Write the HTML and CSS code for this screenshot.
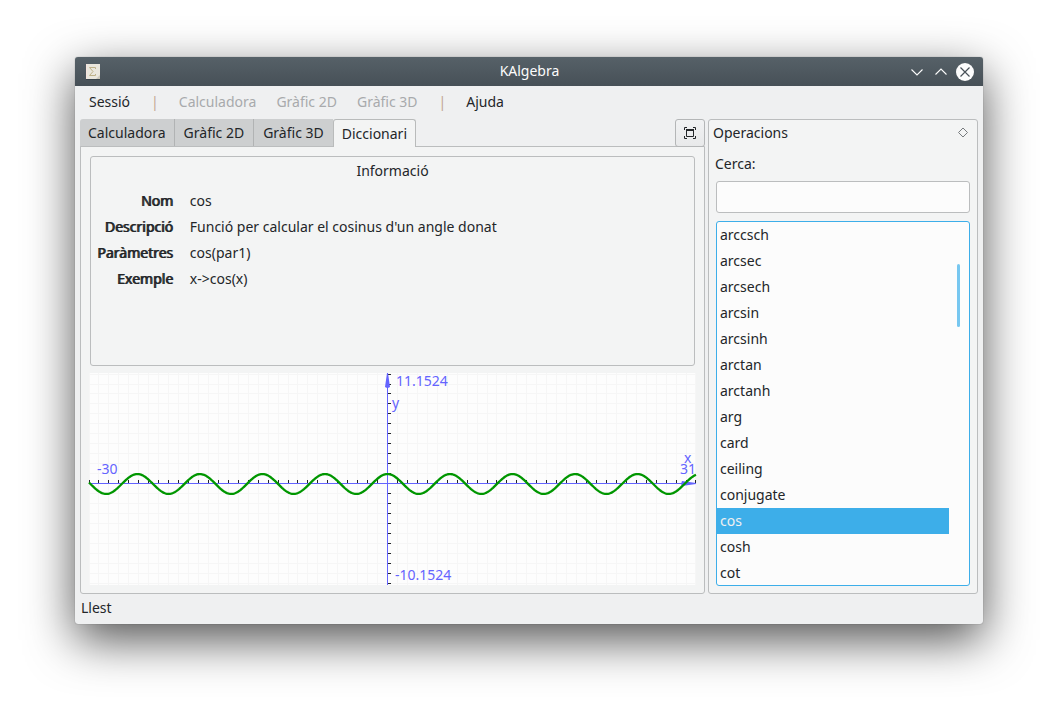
FILE: index.html
```html
<!DOCTYPE html>
<html lang="ca">
<head>
<meta charset="utf-8">
<title>KAlgebra</title>
<link rel="stylesheet" href="styles.css">
</head>
<body>
<div class="window">
  <header class="titlebar">
    <svg class="app-icon" width="16" height="18" viewBox="0 0 16 18" aria-hidden="true">
      <path d="M1 16.500h14" stroke="#303a41" opacity=".6"/>
      <rect x="1" y="1" width="14" height="15" fill="#ebe7dd"/>
      <path d="M1.500 1v15" stroke="#f6e3dc"/>
      <path d="M15 12v4h-4z" fill="#cfcabb"/>
      <path d="M10.500 6V4.500h-6L8 8.500l-3.500 4h6V11" fill="none" stroke="#bfb289"/>
    </svg>
    <h1 class="title">KAlgebra</h1>
    <div class="window-buttons">
      <button class="window-button" type="button" aria-label="Minimitza"><svg width="18" height="18" viewBox="0 0 18 18"><path d="M3.500 6.500 9 12l5.500-5.500" fill="none" stroke="#fcfcfc" stroke-width="1.100"/></svg></button>
      <button class="window-button" type="button" aria-label="Maximitza"><svg width="18" height="18" viewBox="0 0 18 18"><path d="M3.500 11.500 9 6l5.500 5.500" fill="none" stroke="#fcfcfc" stroke-width="1.100"/></svg></button>
      <button class="window-button" type="button" aria-label="Tanca"><svg width="18" height="18" viewBox="0 0 18 18"><circle cx="9" cy="9" r="9" fill="#fcfcfc"/><path d="m4.500 4.500 9 9m0-9-9 9" stroke="#475057" stroke-width="1.200"/></svg></button>
    </div>
  </header>
  <nav class="menubar">
    <button class="menu" type="button">Sessió</button>
    <span class="separator">|</span>
    <button class="menu" type="button" disabled>Calculadora</button>
    <button class="menu" type="button" disabled>Gràfic 2D</button>
    <button class="menu" type="button" disabled>Gràfic 3D</button>
    <span class="separator">|</span>
    <button class="menu" type="button">Ajuda</button>
  </nav>
  <main class="content">
    <section class="workspace">
      <div class="tab-row">
        <div class="tabs" role="tablist">
          <button class="tab" type="button" role="tab" aria-selected="false">Calculadora</button>
          <button class="tab tab-graph" type="button" role="tab" aria-selected="false">Gràfic 2D</button>
          <button class="tab tab-graph" type="button" role="tab" aria-selected="false">Gràfic 3D</button>
          <button class="tab tab-active" type="button" role="tab" aria-selected="true">Diccionari</button>
        </div>
        <button class="fullscreen" type="button" aria-label="Pantalla completa"><svg width="12" height="12" viewBox="0 0 12 12" fill="none" stroke="#232629"><path d="M.5 3V.5H3M9 .5h2.500V3M11.500 9v2.500H9M3 11.500H.5V9"/><path d="M2 3h8" stroke-width="2"/><path d="M2.500 3v6.500h7V3"/></svg></button>
      </div>
      <div class="pane" role="tabpanel">
        <section class="info">
          <h2 class="info-title">Informació</h2>
          <dl class="details">
            <dt>Nom</dt><dd>cos</dd>
            <dt>Descripció</dt><dd>Funció per calcular el cosinus d'un angle donat</dd>
            <dt>Paràmetres</dt><dd>cos(par1)</dd>
            <dt>Exemple</dt><dd>x-&gt;cos(x)</dd>
          </dl>
        </section>
        <svg class="plot" viewBox="0 0 607 212" role="img" aria-label="cos(x)">
          <rect class="plot-bg" width="607" height="212"/>
          <path id="grid" class="grid"/>
          <path id="ticks" class="ticks"/>
          <path class="axis" d="M0 110.500h607M298.500 0v212"/>
          <path class="arrow" d="M298 0h1l2 14-2 1h-1l-2-1zM607 110v1l-14 2-1-2 1-3z"/>
          <path id="curve" class="curve"/>
          <text class="plot-label" x="307" y="13">11.1524</text>
          <text class="plot-label" x="303" y="35">y</text>
          <text class="plot-label" x="306" y="207">-10.1524</text>
          <text class="plot-label" x="8" y="101">-30</text>
          <text class="plot-label" x="595" y="90">x</text>
          <text class="plot-label" x="591" y="101">31</text>
        </svg>
      </div>
    </section>
    <aside class="dock">
      <div class="dock-head">
        <h2 class="dock-title">Operacions</h2>
        <button class="float-button" type="button" aria-label="Desacobla"><svg width="12" height="12" viewBox="0 0 12 12"><path d="m6 1 4.500 4.500L6 10 1.500 5.500z" fill="none" stroke="#777b7e"/></svg></button>
      </div>
      <label class="search-label" for="search">Cerca:</label>
      <input class="search" id="search" type="text">
      <div class="list-frame">
        <ul class="list" role="listbox" aria-label="Operacions">
          <li class="item" role="option">arccsch</li>
          <li class="item" role="option">arcsec</li>
          <li class="item" role="option">arcsech</li>
          <li class="item" role="option">arcsin</li>
          <li class="item" role="option">arcsinh</li>
          <li class="item" role="option">arctan</li>
          <li class="item" role="option">arctanh</li>
          <li class="item" role="option">arg</li>
          <li class="item" role="option">card</li>
          <li class="item" role="option">ceiling</li>
          <li class="item" role="option">conjugate</li>
          <li class="item item-selected" role="option" aria-selected="true">cos</li>
          <li class="item" role="option">cosh</li>
          <li class="item" role="option">cot</li>
        </ul>
        <div class="scroll-track"><div class="scroll-thumb"></div></div>
      </div>
    </aside>
  </main>
  <footer class="status">Llest</footer>
</div>
<script src="plot.js"></script>
</body>
</html>
```

FILE: styles.css
```css
* {
  box-sizing: border-box;
}

body {
  display: flex;
  min-height: 100vh;
  margin: 0;
  padding: 57px 75px 93px;
  background: #fff;
  color: #232629;
  font: 14px/26px "Noto Sans", sans-serif;
}

button,
input {
  padding: 0;
  border: 0;
  background: none;
  color: inherit;
  font: inherit;
}

h1,
h2,
dl,
dd,
ul {
  margin: 0;
  padding: 0;
  font: inherit;
}

.window {
  display: flex;
  flex: 1;
  flex-direction: column;
  border-radius: 3px;
  background: #eff0f1;
  box-shadow: 0 0 1px rgba(0, 0, 0, .5), 0 16px 48px rgba(0, 0, 0, .68);
}

.titlebar {
  display: grid;
  grid-template-columns: 1fr auto 1fr;
  align-items: center;
  height: 29px;
  padding: 0 9px 0 10px;
  border-radius: 3px 3px 0 0;
  background: linear-gradient(#566168, #475057);
  color: #fcfcfc;
}

.title {
  padding-bottom: 2px;
}

.window-buttons {
  display: flex;
  justify-content: flex-end;
  gap: 6px;
}

.window-button {
  display: flex;
}

.menubar {
  display: flex;
  align-items: center;
  height: 33px;
  padding: 0 14px 2px;
}

.menu:disabled {
  color: #a8aaac;
}

.menu + .menu {
  margin-left: 20px;
}

.separator {
  padding: 0 20px 0 21px;
  color: #c2a693;
}

.content {
  display: flex;
  flex: 1;
  gap: 3px;
  padding: 0 5px;
}

.workspace {
  display: flex;
  flex: 1;
  flex-direction: column;
  min-width: 0;
}

.tab-row {
  display: flex;
  justify-content: space-between;
  height: 28px;
  margin-bottom: -1px;
}

.tabs {
  display: flex;
}

.tab {
  padding: 0 8px;
  border-right: 1px solid #b1b3b4;
  border-bottom: 1px solid #bbbdbe;
  background: #cdcfd0;
}

.tab:first-child {
  border-top-left-radius: 3px;
}

.tab-graph {
  padding: 0 9px;
}

.tab:nth-child(3) {
  border-right: 0;
}

.tab-active {
  padding: 0 8px;
  border: 1px solid #b9bbbb;
  border-bottom: 0;
  border-radius: 3px 3px 0 0;
  background: #f3f4f4;
}

.fullscreen {
  display: flex;
  align-items: center;
  justify-content: center;
  width: 30px;
  border: 1px solid #b4b6b7;
  border-radius: 3px;
  background: linear-gradient(#f1f2f3, #e8e9ea);
}

.pane {
  display: flex;
  flex: 1;
  flex-direction: column;
  gap: 7px;
  padding: 9px 8px 8px;
  border: 1px solid #bbbdbe;
  border-radius: 0 0 3px 3px;
  background: #f3f4f4;
}

.tab-active,
.fullscreen {
  z-index: 1;
}

.info {
  flex: 1;
  margin: 0 1px;
  border: 1px solid #bbbdbe;
  border-radius: 3px;
}

.info-title {
  padding-top: 1px;
  text-align: center;
}

.details {
  display: grid;
  grid-template-columns: auto 1fr;
  column-gap: 17px;
  padding: 4px 6px;
}

.details dt {
  text-align: right;
  text-shadow: 1px 0 currentColor;
}

.plot {
  display: block;
  width: 100%;
  overflow: visible;
}

.plot-bg {
  fill: #fdfdfd;
}

.grid,
.ticks,
.axis {
  fill: none;
  shape-rendering: crispEdges;
}

.grid {
  stroke: #f6f6f6;
}

.ticks {
  stroke: #232629;
}

.axis {
  stroke: #6464ff;
}

.arrow,
.plot-label {
  fill: #6464ff;
}

.curve {
  fill: none;
  stroke: #009600;
  stroke-width: 2.300;
}

.dock {
  display: flex;
  flex-direction: column;
  width: 270px;
  padding: 0 7px 7px;
  border: 1px solid #bbbdbe;
  border-radius: 3px;
  background: #f3f4f4;
}

.dock-head {
  display: flex;
  align-items: center;
  justify-content: space-between;
  margin: 0 1px 5px -3px;
}

.float-button {
  display: flex;
}

.search-label {
  margin: 0 -1px;
}

.search {
  height: 32px;
  margin: 4px 0 8px;
  padding: 0 6px;
  border: 1px solid #bbbdbe;
  border-radius: 3px;
  background: #fcfcfc;
}

.list-frame {
  display: flex;
  flex: 1 1 0;
  min-height: 0;
  overflow: hidden;
  border: 1px solid #3daee9;
  border-radius: 3px;
  background: #fcfcfc;
}

.list {
  flex: 1;
  list-style: none;
}

.item {
  height: 26px;
  padding: 0 3px;
}

.item-selected {
  background: #3daee9;
  color: #eff0f1;
}

.scroll-track {
  width: 20px;
  padding: 42px 8px 0;
}

.scroll-thumb {
  width: 3px;
  height: 63px;
  border-radius: 2px;
  background: #77c7f0;
}

.status {
  height: 30px;
  padding: 1px 6px;
}
```

FILE: plot.js
```js
const WIDTH = 607;
const HEIGHT = 212;
const ORIGIN_X = 298.5;
const ORIGIN_Y = 110.5;
const UNIT = 9.95;

const snap = (v) => Math.floor(v) + 0.5;
let grid = "";
let ticks = "";

for (let n = -30; n <= 31; n++) {
  const x = snap(ORIGIN_X + n * UNIT);
  if (n === 0 || x < 0 || x > WIDTH) continue;
  grid += `M${x} 0V${HEIGHT}`;
  ticks += `M${x} 107V110`;
}

for (let n = -10; n <= 11; n++) {
  const y = snap(ORIGIN_Y - n * UNIT);
  if (n === 0) continue;
  grid += `M0 ${y}H${WIDTH}`;
  ticks += `M299 ${y}H302`;
}

const points = [];
for (let x = 0; x <= WIDTH; x++) {
  const y = ORIGIN_Y + 0.5 - UNIT * Math.cos((x - ORIGIN_X) / UNIT);
  points.push(`${x} ${y.toFixed(2)}`);
}

document.getElementById("grid").setAttribute("d", grid);
document.getElementById("ticks").setAttribute("d", ticks);
document.getElementById("curve").setAttribute("d", "M" + points.join("L"));
```
